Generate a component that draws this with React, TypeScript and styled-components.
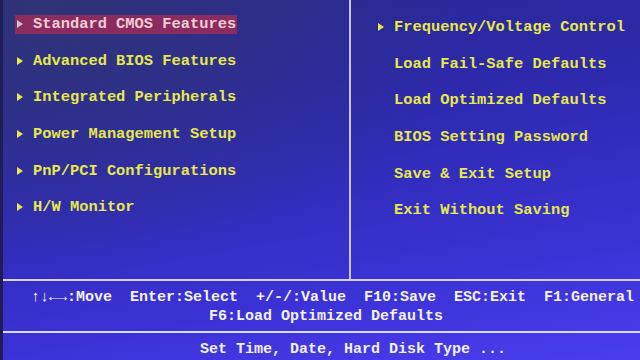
import React from "react"
import styled, { createGlobalStyle } from "styled-components"

const GlobalStyle = createGlobalStyle`
  html, body {
    margin: 0;
    padding: 0;
    background: #1c1c55;
  }
  #root {
    width: 640px;
    height: 360px;
  }
`

const Screen = styled.div`
  width: 640px;
  height: 360px;
  box-sizing: border-box;
  border-left: 3px solid #1d1d58;
  display: flex;
  flex-direction: column;
  overflow: hidden;
  font-family: "Liberation Mono", "DejaVu Sans Mono", monospace;
  font-weight: bold;
  background:
    radial-gradient(ellipse 420px 260px at 40px 10px, rgba(50, 56, 110, 0.75), rgba(50, 56, 110, 0) 100%),
    linear-gradient(170deg, #28258c 0%, #2e2ab0 40%, #3b32d6 75%, #4a3eee 100%);
`

const Main = styled.div`
  height: 279px;
  display: flex;
  border-bottom: 2px solid #d4d2f2;
`

const Column = styled.div<{ $width?: number; $top: number; $left: number }>`
  ${(p) => (p.$width ? `width: ${p.$width}px;` : "flex: 1;")}
  box-sizing: border-box;
  padding-top: ${(p) => p.$top}px;
  padding-left: ${(p) => p.$left}px;
  display: flex;
  flex-direction: column;
`

const RightColumn = styled(Column)`
  border-left: 2px solid #c8c6ee;
`

const Row = styled.div`
  height: 36.6px;
  display: flex;
  align-items: center;
`

const Item = styled.div<{ $active?: boolean }>`
  display: inline-flex;
  align-items: center;
  height: 19px;
  padding-left: 2px;
  padding-right: 1px;
  font-size: 15.4px;
  letter-spacing: 0;
  white-space: pre;
  color: ${(p) => (p.$active ? "#f2cdd6" : "#e6e84c")};
  background: ${(p) => (p.$active ? "#8b2c5e" : "transparent")};
`

const Arrow = styled.span<{ $active?: boolean; $hidden?: boolean }>`
  width: 16px;
  display: inline-flex;
  align-items: center;
  &::before {
    content: "";
    display: ${(p) => (p.$hidden ? "none" : "block")};
    width: 0;
    height: 0;
    border-top: 4px solid transparent;
    border-bottom: 4px solid transparent;
    border-left: 6px solid ${(p) => (p.$active ? "#cbc2cc" : "#e6e84c")};
  }
`

const Help = styled.div`
  height: 52px;
  box-sizing: border-box;
  padding-top: 7px;
  border-bottom: 2px solid #dcdaf6;
  color: #f2f2ff;
`

const Line = styled.div<{ $left: number }>`
  padding-left: ${(p) => p.$left}px;
  font-size: 15px;
  line-height: 19px;
  white-space: pre;
`

const Status = styled.div`
  padding-top: 7px;
  color: #f0f0ff;
`

const leftItems = [
  "Standard CMOS Features",
  "Advanced BIOS Features",
  "Integrated Peripherals",
  "Power Management Setup",
  "PnP/PCI Configurations",
  "H/W Monitor",
]

const rightItems: { label: string; arrow: boolean }[] = [
  { label: "Frequency/Voltage Control", arrow: true },
  { label: "Load Fail-Safe Defaults", arrow: false },
  { label: "Load Optimized Defaults", arrow: false },
  { label: "BIOS Setting Password", arrow: false },
  { label: "Save & Exit Setup", arrow: false },
  { label: "Exit Without Saving", arrow: false },
]

export default function App() {
  return (
    <>
      <GlobalStyle />
      <Screen>
        <Main>
          <Column $width={346} $top={6} $left={12}>
            {leftItems.map((label, i) => (
              <Row key={label}>
                <Item $active={i === 0}>
                  <Arrow $active={i === 0} />
                  {label}
                </Item>
              </Row>
            ))}
          </Column>
          <RightColumn $top={9} $left={25}>
            {rightItems.map((it) => (
              <Row key={it.label}>
                <Item>
                  <Arrow $hidden={!it.arrow} />
                  {it.label}
                </Item>
              </Row>
            ))}
          </RightColumn>
        </Main>
        <Help>
          <Line $left={28}>↑↓←→:Move  Enter:Select  +/-/:Value  F10:Save  ESC:Exit  F1:General</Line>
          <Line $left={206}>F6:Load Optimized Defaults</Line>
        </Help>
        <Status>
          <Line $left={197}>Set Time, Date, Hard Disk Type ...</Line>
        </Status>
      </Screen>
    </>
  )
}
